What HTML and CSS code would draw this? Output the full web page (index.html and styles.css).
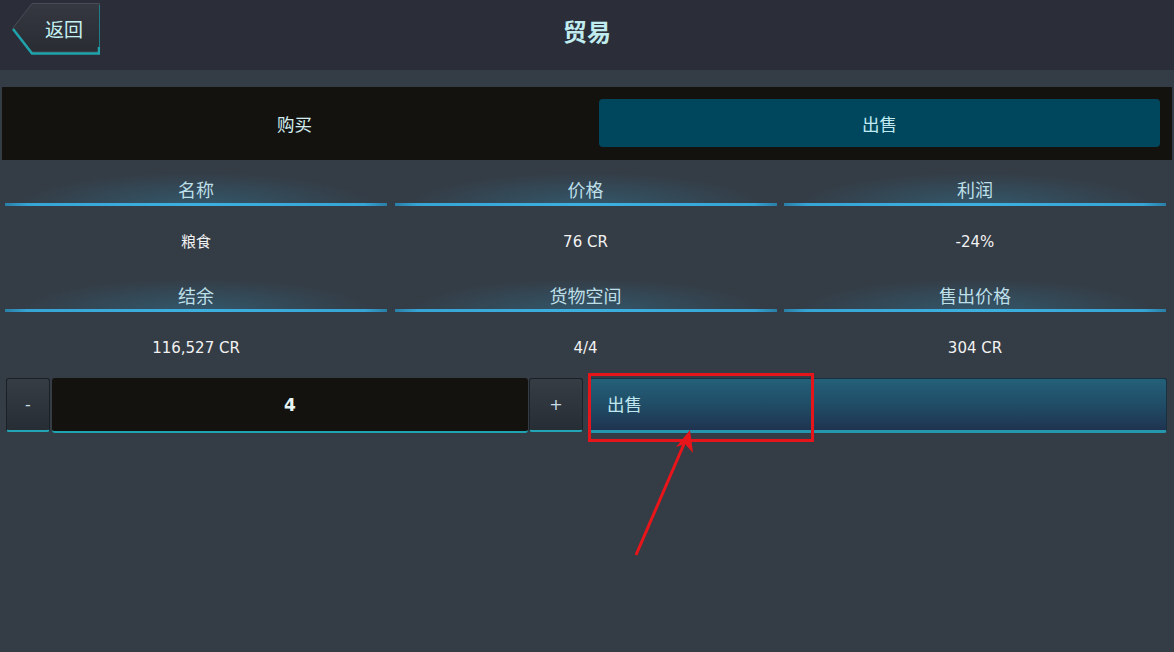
FILE: index.html
```html
<!DOCTYPE html>
<html lang="zh-CN">
<head>
    <meta charset="UTF-8">
    <meta name="viewport" content="width=device-width, initial-scale=1.0">
    <title>贸易</title>
    <link rel="stylesheet" href="styles.css">
</head>
<body>
    <!-- Top bar -->
    <header class="topbar">
        <button class="back">
            <svg class="back-shape" width="88" height="53" viewBox="0 0 88 53">
                <defs>
                    <linearGradient id="backFill" x1="0" y1="0" x2="0" y2="1">
                        <stop offset="0" stop-color="#363841"/>
                        <stop offset="1" stop-color="#2a2c34"/>
                    </linearGradient>
                </defs>
                <polygon points="20,0.5 87.5,0.5 87.5,49 20,49 1,25" fill="url(#backFill)" stroke="#4a4c55" stroke-width="1"/>
                <polyline points="1,26 20,50.5 87,50.5 87,44" fill="none" stroke="#1fa3ad" stroke-width="2.5"/>
                <line x1="87.5" y1="2" x2="87.5" y2="44" stroke="#1c7f88" stroke-width="1"/>
            </svg>
            <span class="back-text">返回</span>
        </button>
        <h1 class="title">贸易</h1>
        <div></div>
    </header>

    <!-- Buy / Sell tabs -->
    <nav class="tabs">
        <button class="tab">购买</button>
        <button class="tab active">出售</button>
    </nav>

    <!-- Trade info -->
    <section class="stats">
        <div class="stat-head">名称</div>
        <div class="stat-head">价格</div>
        <div class="stat-head">利润</div>
        <div class="stat-val">粮食</div>
        <div class="stat-val">76 CR</div>
        <div class="stat-val">-24%</div>
        <div class="stat-head">结余</div>
        <div class="stat-head">货物空间</div>
        <div class="stat-head">售出价格</div>
        <div class="stat-val">116,527 CR</div>
        <div class="stat-val">4/4</div>
        <div class="stat-val">304 CR</div>
    </section>

    <!-- Quantity and sell -->
    <div class="trade">
        <button class="step minus">-</button>
        <div class="qty">4</div>
        <button class="step plus">+</button>
        <button class="sell">出售</button>
    </div>

    <!-- Annotation -->
    <div class="mark-box"></div>
    <svg class="mark-arrow" width="1174" height="652" viewBox="0 0 1174 652">
        <line x1="636" y1="555" x2="684" y2="444" stroke="#e8151a" stroke-width="3"/>
        <polygon points="690,430 693,453 685,444 676,447" fill="#e8151a"/>
    </svg>
</body>
</html>
```

FILE: styles.css
```css
body {
    margin: 0;
    width: 1174px;
    height: 652px;
    overflow: hidden;
    position: relative;
    background-color: #343c45;
    font-family: "DejaVu Sans", "Noto Sans CJK SC", sans-serif;
}

button {
    font-family: "Noto Sans CJK SC", "DejaVu Sans", sans-serif;
    cursor: pointer;
}

.topbar {
    height: 70px;
    background-color: #2b2d38;
    display: grid;
    grid-template-columns: 1fr auto 1fr;
    align-items: start;
}

.back {
    position: relative;
    width: 88px;
    height: 53px;
    margin: 3px 0 0 12px;
    padding: 0 0 3px 33px;
    border: none;
    background: none;
    display: flex;
    align-items: center;
    color: #c6f1f1;
    font-size: 19px;
}

.back-shape {
    position: absolute;
    left: 0;
    top: 0;
}

.back-text {
    position: relative;
}

.title {
    margin: 0;
    line-height: 62px;
    font-family: "Noto Sans CJK SC", sans-serif;
    font-size: 24px;
    font-weight: bold;
    color: #c0ecef;
}

.tabs {
    margin: 17px 2px 0;
    height: 73px;
    box-sizing: border-box;
    padding: 12px 12px 13px;
    background-color: #14120f;
    display: grid;
    grid-template-columns: 1fr 1fr;
    gap: 24px;
}

.tab {
    border: none;
    border-radius: 4px;
    background: none;
    color: #d2eef0;
    font-size: 17.5px;
}

.tab.active {
    background-color: #00475d;
    color: #bfeaf2;
}

.stats {
    margin-top: 10px;
    padding: 0 8px 0 5px;
    display: grid;
    grid-template-columns: repeat(3, 1fr);
    grid-template-rows: 36px 70px 36px 66px;
    column-gap: 7.5px;
}

.stat-head {
    box-sizing: border-box;
    padding-top: 8px;
    line-height: 22px;
    text-align: center;
    font-family: "Noto Sans CJK SC", sans-serif;
    font-size: 18px;
    color: #bcdfe8;
    background:
        linear-gradient(90deg, #2a7ea6 0, #36a5d6 6%, #3db0e0 50%, #36a5d6 94%, #2a7ea6 100%) bottom / 100% 3px no-repeat,
        radial-gradient(ellipse 48% 95% at 50% 100%, rgba(50, 130, 165, 0.4), rgba(50, 130, 165, 0) 100%);
}

.stat-val {
    padding-top: 27px;
    line-height: 18px;
    text-align: center;
    font-size: 15px;
    color: #f2f2f2;
}

.trade {
    display: flex;
    height: 55px;
    margin: 0 7px 0 6px;
}

.step {
    height: 54px;
    border: 1px solid #1b2026;
    border-bottom: 2px solid #22a6b6;
    border-radius: 3px;
    background: linear-gradient(#353d45, #272d34);
    color: #c8dde6;
    font-family: "DejaVu Sans", sans-serif;
    font-size: 16px;
}

.minus {
    width: 44px;
}

.plus {
    width: 54px;
    margin-left: 1px;
}

.qty {
    flex: 0 0 476px;
    margin-left: 2px;
    box-sizing: border-box;
    border-bottom: 2px solid #1fa2b2;
    border-radius: 3px;
    background-color: #14120f;
    display: flex;
    align-items: center;
    justify-content: center;
    font-size: 17px;
    font-weight: bold;
    color: #e6f4f4;
}

.sell {
    flex: 1;
    margin-left: 6px;
    padding: 0 0 2px 17px;
    border: 1px solid #163141;
    border-bottom: 3px solid #2597ad;
    border-radius: 3px;
    background: linear-gradient(#246079 0%, #204a64 55%, #1f3350 100%);
    text-align: left;
    color: #bfe6ee;
    font-size: 17.5px;
}

.mark-box {
    position: absolute;
    left: 588px;
    top: 373px;
    width: 226px;
    height: 69px;
    box-sizing: border-box;
    border: 3px solid #e4161b;
}

.mark-arrow {
    position: absolute;
    left: 0;
    top: 0;
    pointer-events: none;
}
```
